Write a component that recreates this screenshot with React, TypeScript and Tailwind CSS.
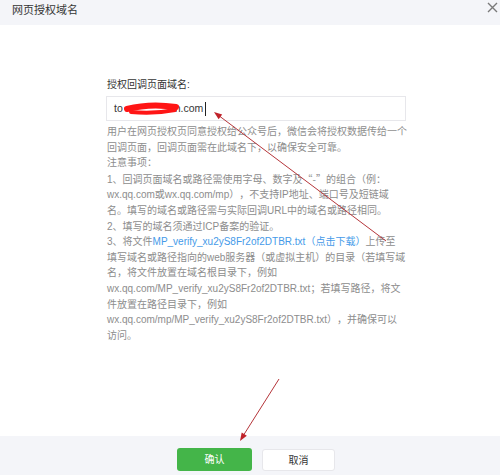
import React from "react";

const font = { fontFamily: '"Liberation Sans", "Noto Sans CJK SC", sans-serif' };
const cjk = { fontFamily: '"Noto Sans CJK SC", sans-serif' };

export default function App() {
  return (
    <div
      className="relative w-[500px] h-[475px] overflow-hidden bg-white flex flex-col [text-spacing-trim:space-all]"
      style={font}
    >
      {/* header */}
      <div className="h-[25px] shrink-0 bg-[#f4f5f9] flex items-start justify-between pl-[12px] pr-[2px]">
        <div className="text-[11px] leading-[20px] text-[#353535]">网页授权域名</div>
        <svg width="11" height="11" viewBox="0 0 11 11" className="mt-[2px]">
          <path d="M1 1 L10 10 M10 1 L1 10" stroke="#7a7a7a" strokeWidth="1.4" />
        </svg>
      </div>

      {/* body */}
      <div className="flex-1 pl-[106px] pt-[52px]">
        <div className="w-[300px]">
          <div className="text-[10px] leading-[16px] text-[#353535] pl-[1px] mb-[3px]">授权回调页面域名:</div>
          <div className="h-[25px] border border-[#e7e7eb] flex items-center pl-[7px] text-[10.5px] text-[#353535]">
            <span>to</span>
            <span className="inline-block w-[52px]" />
            <span>n.com</span>
            <span className="inline-block w-[1px] h-[14px] bg-[#222] ml-[2px]" />
          </div>
          <div className="mt-[3px] pl-[1px] text-[10px] leading-[15.6px] text-[#8d8d8d] whitespace-nowrap">
            <div>用户在网页授权页同意授权给公众号后，微信会将授权数据传给一个</div>
            <div>回调页面，回调页面需在此域名下，以确保安全可靠。</div>
            <div>注意事项：</div>
            <div>
              1、回调页面域名或路径需使用字母、数字及<span style={cjk}>“-”</span>的组合<span style={cjk}>（</span>例：
            </div>
            <div>wx.qq.com或wx.qq.com/mp），不支持IP地址、端口号及短链域</div>
            <div>名。填写的域名或路径需与实际回调URL中的域名或路径相同。</div>
            <div>2、填写的域名须通过ICP备案的验证。</div>
            <div>
              3、将文件<span className="text-[#459ae9]">MP_verify_xu2yS8Fr2of2DTBR.txt（点击下载）</span>上传至
            </div>
            <div>填写域名或路径指向的web服务器（或虚拟主机）的目录（若填写域</div>
            <div>名，将文件放置在域名根目录下，例如</div>
            <div>wx.qq.com/MP_verify_xu2yS8Fr2of2DTBR.txt；若填写路径，将文</div>
            <div>件放置在路径目录下，例如</div>
            <div>wx.qq.com/mp/MP_verify_xu2yS8Fr2of2DTBR.txt），并确保可以</div>
            <div>访问。</div>
          </div>
        </div>
      </div>

      {/* footer */}
      <div className="h-[39px] shrink-0 bg-[#f4f5f9] flex items-start gap-[10px] pl-[177px] pt-[12px]">
        <button className="w-[75px] h-[23px] rounded-[3px] bg-[#44b549] text-white text-[10px] flex items-center justify-center">
          确认
        </button>
        <button className="w-[73px] h-[22px] mt-[1px] rounded-[3px] bg-white border border-[#e7e7eb] text-[#353535] text-[10px] flex items-center justify-center">
          取消
        </button>
      </div>

      {/* annotations */}
      <svg
        className="absolute inset-0 pointer-events-none"
        width="500"
        height="475"
        viewBox="0 0 500 475"
      >
        <path d="M127 109 Q 150 103 176 107" stroke="#ff1515" strokeWidth="6" fill="none" strokeLinecap="round" />
        <path d="M131 112 Q 155 114 175 110" stroke="#ff1515" strokeWidth="4" fill="none" strokeLinecap="round" />
        <line x1="386" y1="241" x2="218" y2="115" stroke="#b5353a" strokeWidth="1" />
        <polygon points="214,112 222.2,114.4 218.6,119.2" fill="#c0222a" />
        <line x1="279" y1="379" x2="243" y2="436" stroke="#b5353a" strokeWidth="1" />
        <polygon points="240,441 246.8,435.8 241.7,432.6" fill="#c0222a" />
      </svg>
    </div>
  );
}
